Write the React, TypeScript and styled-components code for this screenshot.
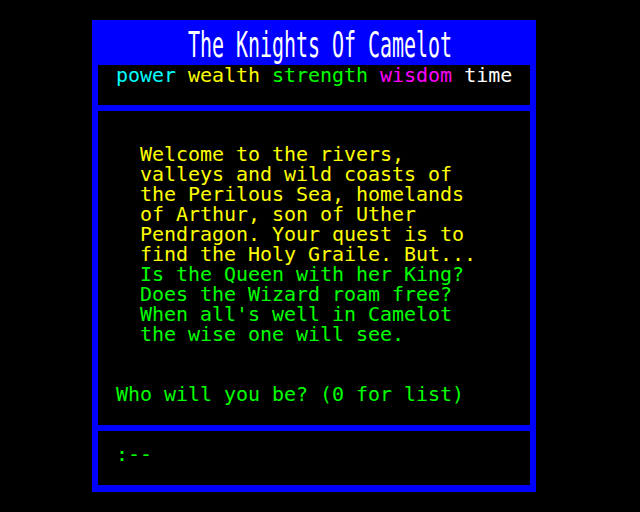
import React from "react";
import styled, { createGlobalStyle } from "styled-components";

const Global = createGlobalStyle`
  html, body {
    margin: 0;
    padding: 0;
    background: #000000;
  }
  body {
    width: 640px;
    height: 512px;
    overflow: hidden;
  }
`;

const Screen = styled.div`
  width: 640px;
  height: 512px;
  background: #000000;
  padding: 20px 0 0 92px;
  box-sizing: border-box;
  font-family: "DejaVu Sans Mono", "Liberation Mono", monospace;
  font-size: 20px;
  letter-spacing: -0.04px;
  line-height: 20px;
`;

const Frame = styled.div`
  width: 444px;
  height: 472px;
  box-sizing: border-box;
  background: #0000ff;
  padding: 0 6px 6px;
  display: flex;
  flex-direction: column;
  gap: 6px;
`;

const TitleBar = styled.div`
  height: 40px;
  flex: 0 0 auto;
  padding: 5px 0 0 90px;
  margin-bottom: -6px;
  color: #ffffff;
  line-height: 40px;
  white-space: pre;
`;

const TallText = styled.span`
  display: inline-block;
  transform: scaleY(1.75);
  transform-origin: 50% 50%;
`;

const Panel = styled.div<{ $height: number; $top: number }>`
  flex: 0 0 auto;
  height: ${(p) => p.$height}px;
  box-sizing: border-box;
  background: #000000;
  padding: ${(p) => p.$top}px 0 0 18px;
  white-space: pre;
`;

const Word = styled.span<{ $color: string }>`
  color: ${(p) => p.$color};
`;

const Line = styled.div<{ $color: string; $indent?: number; $gap?: number }>`
  color: ${(p) => p.$color};
  padding-left: ${(p) => (p.$indent ?? 0) * 12}px;
  margin-top: ${(p) => p.$gap ?? 0}px;
  height: 20px;
`;

const YELLOW = "#ffff00";
const GREEN = "#00ff00";

const story: { text: string; color: string }[] = [
  { text: "Welcome to the rivers,", color: YELLOW },
  { text: "valleys and wild coasts of", color: YELLOW },
  { text: "the Perilous Sea, homelands", color: YELLOW },
  { text: "of Arthur, son of Uther", color: YELLOW },
  { text: "Pendragon. Your quest is to", color: YELLOW },
  { text: "find the Holy Graile. But...", color: YELLOW },
  { text: "Is the Queen with her King?", color: GREEN },
  { text: "Does the Wizard roam free?", color: GREEN },
  { text: "When all's well in Camelot", color: GREEN },
  { text: "the wise one will see.", color: GREEN },
];

export default function App() {
  return (
    <>
      <Global />
      <Screen>
        <Frame>
          <TitleBar>
            <TallText>The Knights Of Camelot</TallText>
          </TitleBar>
          <Panel $height={40} $top={0}>
            <Word $color="#00ffff">power</Word>{" "}
            <Word $color={YELLOW}>wealth</Word>{" "}
            <Word $color={GREEN}>strength</Word>{" "}
            <Word $color="#ff00ff">wisdom</Word>{" "}
            <Word $color="#ffffff">time</Word>
          </Panel>
          <Panel $height={314} $top={33}>
            {story.map((l, i) => (
              <Line key={i} $color={l.color} $indent={2}>
                {l.text}
              </Line>
            ))}
            <Line $color={GREEN} $gap={40}>
              Who will you be? (0 for list)
            </Line>
          </Panel>
          <Panel $height={54} $top={13}>
            <Line $color={GREEN}>:--</Line>
          </Panel>
        </Frame>
      </Screen>
    </>
  );
}
